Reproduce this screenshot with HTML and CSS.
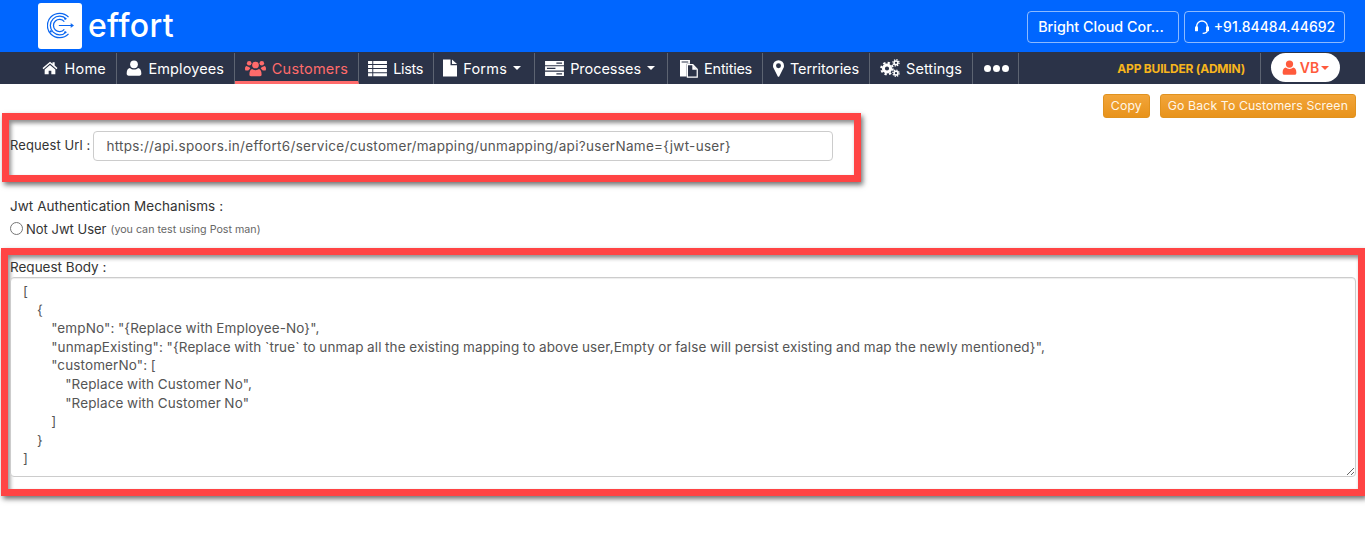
FILE: index.html
```html
<!DOCTYPE html>
<html lang="en">
<head>
<meta charset="utf-8">
<title>Effort - API Builder</title>
<link rel="stylesheet" href="styles.css">
</head>
<body>
<header class="topbar">
  <div class="brand">
    <span class="logo-tile">
      <svg class="logo-mark" viewBox="0 0 32 32" fill="none" stroke="#0a66f0" stroke-width="1.500">
        <path d="M25.500 6A14.500 14.500 0 1 0 25.500 26"/>
        <path d="M23 8.500A11 11 0 1 0 23 23.500"/>
        <path d="M20.500 11.500A7.200 7.200 0 1 0 20.500 20.500"/>
        <path d="M14 16H31M28 14l3 2-3 2" stroke-width="1.300"/>
        <circle cx="21.500" cy="8" r="1.300" fill="#0a66f0" stroke="none"/>
        <circle cx="21.500" cy="24" r="1.300" fill="#0a66f0" stroke="none"/>
        <circle cx="4.500" cy="23" r="1.300" fill="#0a66f0" stroke="none"/>
      </svg>
    </span>
    <span class="brand-name">effort</span>
  </div>
  <div class="top-actions">
    <a class="top-chip chip-company">Bright Cloud Cor...</a>
    <a class="top-chip chip-phone">
      <svg class="headset" viewBox="0 0 24 24" fill="none" stroke="#fff" stroke-width="2"><path d="M4 14v-3a8 8 0 0 1 16 0v3"/><rect x="1.500" y="11" width="4.500" height="7.500" rx="1.800" fill="#fff" stroke="none"/><rect x="18" y="11" width="4.500" height="7.500" rx="1.800" fill="#fff" stroke="none"/><path d="M20 17c0 3-2.500 4.500-7 4.500"/></svg>
      +91.84484.44692
    </a>
  </div>
</header>

<nav class="navbar">
  <a class="nav-item w-home">
    <svg class="ico i-home" viewBox="0 0 24 24"><path d="M12 2.500.8 12l1.400 1.700L12 5.400l9.800 8.300 1.400-1.700-4.200-3.600V3.500h-3.200v2z"/><path d="M12 7.500 4 14.300V21.500h6v-5.500h4v5.500h6v-7.200z"/></svg>Home</a>
  <a class="nav-item w-emp">
    <svg class="ico i-user" viewBox="0 0 24 24"><circle cx="12" cy="6.500" r="5.800"/><path d="M4 23.500c-2 0-3-1.300-3-3.300C1 15.500 3 12 6 12c1.500 1.500 3.600 2.300 6 2.300s4.500-.8 6-2.300c3 0 5 3.500 5 8.200 0 2-1 3.300-3 3.300z"/></svg>Employees</a>
  <a class="nav-item w-cust is-active">
    <svg class="ico i-users" viewBox="0 0 30 24"><circle cx="15" cy="7" r="4.800"/><path d="M8.500 23c-1.500 0-2.200-1-2.200-2.400 0-4.200 1.500-7.800 4-7.800 1 1 2.700 1.700 4.700 1.700s3.700-.7 4.700-1.700c2.500 0 4 3.600 4 7.800 0 1.400-.7 2.400-2.200 2.400z"/><circle cx="6" cy="4.500" r="3.300"/><circle cx="24" cy="4.500" r="3.300"/><path d="M1.500 15c-.9 0-1.500-.5-1.500-2.500C0 10 1 8.500 2.500 8.500 3.500 9.300 5 9.800 6.300 9.800c.1 1 .6 2 1.400 2.700-1.400.5-2.300 1.300-3 2.500z"/><path d="M28.500 15c.9 0 1.500-.5 1.500-2.500 0-2.500-1-4-2.500-4-1 .8-2.500 1.300-3.800 1.300-.1 1-.6 2-1.400 2.700 1.400.5 2.300 1.300 3 2.500z"/></svg>Customers</a>
  <a class="nav-item w-lists">
    <svg class="ico i-list" viewBox="0 0 20 18"><path d="M0 1h4.500v3.300H0zM5.500 1H20v3.300H5.500zM0 5.300h4.500v3.300H0zM5.500 5.300H20v3.300H5.500zM0 9.600h4.500v3.300H0zM5.500 9.600H20v3.300H5.500zM0 13.900h4.500v3.300H0zM5.500 13.900H20v3.300H5.500z"/></svg>Lists</a>
  <a class="nav-item w-forms has-caret">
    <svg class="ico i-file" viewBox="0 0 14 18"><path d="M0 .5h7.500v5.800H14V17.500H0z"/><path d="M9 .5l5 4.600H9z"/></svg>Forms<span class="caret"></span></a>
  <a class="nav-item w-proc has-caret">
    <svg class="ico i-server" viewBox="0 0 20 18"><path d="M0 1h20v4.500H0zM0 6.700h20v4.500H0zM0 12.400h20v4.500H0z"/><path class="cut" d="M12 2.600h6v1.300h-6zM2 8.300h9v1.300H2zM12 14h6v1.300h-6z"/></svg>Processes<span class="caret"></span></a>
  <a class="nav-item w-ent">
    <svg class="ico i-docs" viewBox="0 0 19 19"><path d="M0 .5h10.500v4H7v13.500H0zM1.700 2v1.200h7V2z" fill-rule="evenodd"/><path class="outline" d="M7.800 5.500h5.700l4.700 4.700v8.300H7.800z"/><path d="M13 5.500l5.200 5.200H13z"/></svg>Entities</a>
  <a class="nav-item w-terr">
    <svg class="ico i-pin" viewBox="0 0 12 18"><path fill-rule="evenodd" d="M6 0a6 6 0 0 1 6 6c0 1.400-.4 2.300-1 3.300L6.900 17.400a1 1 0 0 1-1.800 0L1 9.300C.4 8.300 0 7.400 0 6a6 6 0 0 1 6-6zm0 3.300a2.700 2.700 0 1 0 0 5.400 2.700 2.700 0 0 0 0-5.400z"/></svg>Territories</a>
  <a class="nav-item w-set">
    <svg class="ico i-cogs" viewBox="0 0 20 18" fill="none" stroke="#fff">
      <circle cx="7" cy="9.500" r="3.600" stroke-width="3"/>
      <circle cx="7" cy="9.500" r="5.800" stroke-width="2" stroke-dasharray="2.300 2.250"/>
      <circle cx="16" cy="3.800" r="1.900" stroke-width="1.500"/>
      <circle cx="16" cy="3.800" r="3.100" stroke-width="1.300" stroke-dasharray="1.300 1.130"/>
      <circle cx="16" cy="14.200" r="1.900" stroke-width="1.500"/>
      <circle cx="16" cy="14.200" r="3.100" stroke-width="1.300" stroke-dasharray="1.300 1.130"/>
    </svg>Settings</a>
  <a class="nav-item w-more"><span class="dots"><i></i><i></i><i></i></span></a>
  <span class="nav-spacer"></span>
  <span class="role">APP BUILDER (ADMIN)</span>
  <span class="user-slot">
    <a class="user-pill">
      <svg class="pill-user" viewBox="0 0 24 24"><circle cx="12" cy="6.500" r="5.800"/><path d="M4 23.500c-2 0-3-1.300-3-3.300C1 15.500 3 12 6 12c1.500 1.500 3.600 2.300 6 2.300s4.500-.8 6-2.300c3 0 5 3.500 5 8.200 0 2-1 3.300-3 3.300z"/></svg>VB<span class="caret caret-red"></span>
    </a>
  </span>
</nav>

<main class="content">
  <div class="page-actions">
    <button class="btn">Copy</button>
    <button class="btn">Go Back To Customers Screen</button>
  </div>

  <section class="callout callout-url">
    <label class="field-label">Request Url :</label>
    <input class="url-input" type="text" readonly value="https://api.spoors.in/effort6/service/customer/mapping/unmapping/api?userName={jwt-user}">
  </section>

  <div class="auth">
    <div class="auth-title">Jwt Authentication Mechanisms :</div>
    <label class="auth-option"><span class="radio"></span>Not Jwt User <small class="hint">(you can test using Post man)</small></label>
  </div>

  <section class="callout callout-body">
    <label class="field-label body-label">Request Body :</label>
    <textarea class="body-input" readonly>[
    {
        "empNo": "{Replace with Employee-No}",
        "unmapExisting": "{Replace with `true` to unmap all the existing mapping to above user,Empty or false will persist existing and map the newly mentioned}",
        "customerNo": [
            "Replace with Customer No",
            "Replace with Customer No"
        ]
    }
]</textarea>
  </section>
</main>
</body>
</html>
```

FILE: styles.css
```css
* { box-sizing: border-box; }
html, body { margin: 0; padding: 0; }
body {
  font-family: Inter, "Open Sans", "Liberation Sans", sans-serif;
  font-size: 13px;
  color: #333;
  background: #fff;
}

/* top bar */
.topbar {
  height: 52px;
  background: #0066ff;
  display: flex;
  align-items: flex-start;
  justify-content: space-between;
  padding: 3px 20px 0 38px;
}
.brand { display: flex; align-items: center; gap: 6px; }
.logo-tile {
  width: 44px;
  height: 46px;
  background: #fff;
  border-radius: 3px;
  display: flex;
  align-items: center;
  justify-content: center;
}
.logo-mark { width: 27px; height: 27px; margin-top: -2px; }
.brand-name {
  color: #fff;
  font-size: 32px;
  font-weight: 500;
  line-height: 44px;
  letter-spacing: .3px;
}
.top-actions { display: flex; gap: 5px; margin-top: 8px; }
.top-chip {
  height: 32px;
  padding-bottom: 1px;
  border: 1px solid rgba(255, 255, 255, .55);
  border-radius: 4px;
  color: #fff;
  font-size: 14px;
  font-weight: 500;
  display: flex;
  align-items: center;
  justify-content: center;
  white-space: nowrap;
}
.chip-company { width: 152px; padding-right: 4px; font-size: 14.300px; }
.chip-phone { width: 161px; gap: 4px; }
.headset { width: 16px; height: 16px; }

/* nav */
.navbar {
  height: 32px;
  background: #2b3348;
  display: flex;
  align-items: stretch;
}
.nav-item {
  display: flex;
  align-items: center;
  justify-content: flex-end;
  gap: 6px;
  height: 31px;
  margin-top: 1px;
  padding: 0 10px 1px 0;
  color: #fff;
  font-size: 14.500px;
  letter-spacing: .2px;
  border-right: 1px solid #5d6472;
  white-space: nowrap;
}
.has-caret { padding-right: 13px; }
.w-home { width: 117px; }
.w-emp { width: 118px; letter-spacing: .1px; }
.w-cust { width: 124px; }
.w-lists { width: 75px; letter-spacing: -.35px; }
.w-forms { width: 101px; }
.w-proc { width: 133px; letter-spacing: -.05px; padding-right: 12px; }
.w-ent { width: 95px; letter-spacing: -.25px; }
.w-terr { width: 107px; letter-spacing: -.1px; }
.w-set { width: 103px; letter-spacing: .05px; }
.w-more { width: 46px; }
.is-active {
  color: #ff6b6b;
  border-bottom: 3px solid #ff6b6b;
  padding-top: 3px;
  padding-bottom: 1px;
}
.ico { fill: #fff; flex: none; }
.is-active .ico { fill: #ff6b6b; }
.i-home { width: 18px; height: 16px; }
.i-user { width: 16px; height: 16px; }
.i-users { width: 21px; height: 17px; }
.i-list { width: 19px; height: 17px; }
.i-file { width: 14px; height: 18px; }
.i-server { width: 19px; height: 17px; }
.i-server .cut { fill: #2b3348; }
.i-docs { width: 18px; height: 19px; }
.i-docs .outline { fill: #2b3348; stroke: #fff; stroke-width: 1.300; }
.i-pin { width: 11px; height: 17px; }
.i-cogs { width: 20px; height: 18px; fill: none; }
.caret {
  width: 0;
  height: 0;
  border-left: 4px solid transparent;
  border-right: 4px solid transparent;
  border-top: 4px solid #fff;
}
.w-more { justify-content: flex-start; padding-left: 11px; }
.dots { display: flex; gap: 2px; }
.dots i { width: 7px; height: 7px; border-radius: 50%; background: #fff; }
.nav-spacer { flex: 1; }
.role {
  align-self: center;
  color: #f7b51d;
  font-size: 12px;
  font-weight: 700;
  letter-spacing: -.2px;
  white-space: nowrap;
}
.user-slot {
  width: 105px;
  margin-left: 15px;
  height: 31px;
  margin-top: 1px;
  padding-left: 10px;
  border-left: 1px solid #5d6472;
}
.user-pill {
  width: 69px;
  height: 29px;
  background: #fff;
  border-radius: 15px;
  color: #ff5a3c;
  font-weight: 600;
  font-size: 14px;
  display: flex;
  align-items: center;
  justify-content: center;
  gap: 3px;
}
.pill-user { width: 15px; height: 15px; fill: #ff5a3c; }
.caret-red { border-top-color: #ff5a3c; margin-left: -1px; }

/* page */
.content { min-height: 464px; }
.page-actions {
  display: flex;
  justify-content: flex-end;
  gap: 10px;
  padding: 10px 9px 0 0;
}
.btn {
  height: 24px;
  padding: 0 7px 2px;
  border: 1px solid #e0921f;
  border-radius: 3px;
  background: linear-gradient(#f2a53a, #e8931b);
  color: #fff6e8;
  font-family: inherit;
  font-size: 12.300px;
  letter-spacing: .1px;
  white-space: nowrap;
}
.callout {
  border: 7px solid #ff4444;
  box-shadow: 2px 3px 5px rgba(0, 0, 0, .55), inset 2px 3px 4px rgba(0, 0, 0, .45);
}
.callout-url {
  width: 859px;
  height: 69px;
  margin: -5px 0 0 2px;
  padding: 11px 0 0 1px;
  display: flex;
  align-items: flex-start;
  gap: 3px;
}
.field-label { color: #333; font-size: 13px; letter-spacing: .1px; line-height: 28px; white-space: nowrap; }
.url-input {
  width: 740px;
  height: 30px;
  padding: 0 12px;
  border: 1px solid #ccc;
  border-radius: 4px;
  color: #555;
  font-family: inherit;
  font-size: 13.500px;
  letter-spacing: .3px;
  outline: none;
}
.auth { margin: 14px 0 10px 10px; }
.auth-title { line-height: 20px; font-size: 13.500px; letter-spacing: .05px; }
.auth-option { display: flex; align-items: center; height: 22px; padding-top: 4px; gap: 3px; }
.radio {
  width: 13px;
  height: 13px;
  border: 1px solid #767676;
  border-radius: 50%;
  margin-top: -2px;
}
.hint { font-size: 10.700px; color: #666; margin: 1px 0 0 1px; }
.callout-body {
  width: 1364px;
  height: 248px;
  margin-left: 1px;
  padding: 2px 2px 0 1px;
}
.body-label { display: block; font-size: 13.500px; line-height: 20px; margin-left: 1px; letter-spacing: 0; }
.body-input {
  display: block;
  width: 1346px;
  height: 200px;
  margin-left: 1px;
  padding: 4px 12px;
  border: 1px solid #ccc;
  border-radius: 4px;
  color: #555;
  font-family: inherit;
  font-size: 13.500px;
  letter-spacing: .12px;
  word-spacing: -.4px;
  line-height: 18.600px;
  outline: none;
  box-shadow: inset 0 1px 1px rgba(0, 0, 0, .075);
  white-space: pre;
  overflow: hidden;
}
```
